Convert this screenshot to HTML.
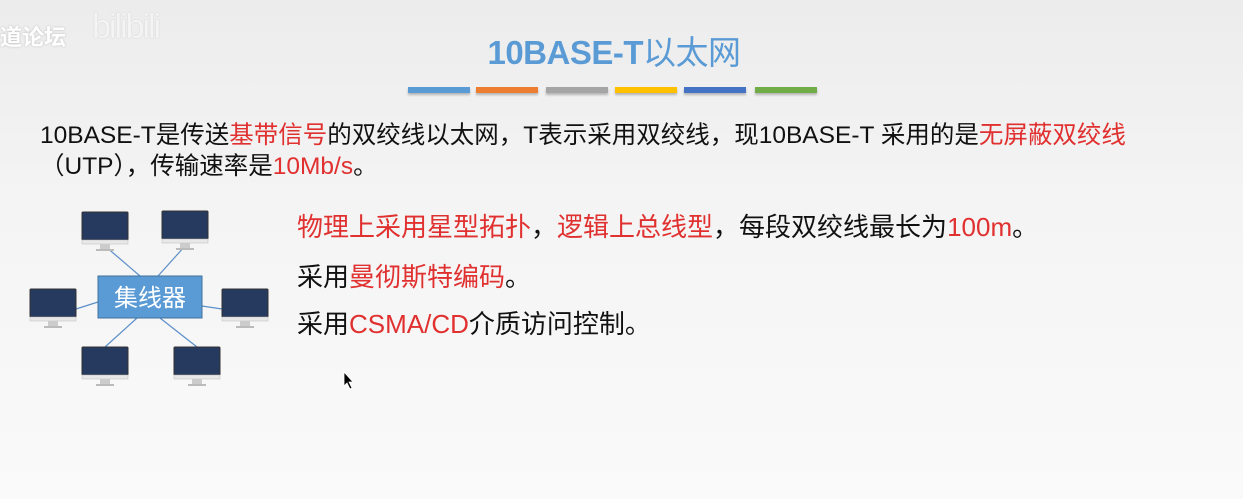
<!DOCTYPE html>
<html><head><meta charset="utf-8"><style>
body{margin:0;width:1243px;height:499px;overflow:hidden;background:linear-gradient(#ececec 0%,#f4f4f4 40%,#fafafa 100%);font-family:"Liberation Sans","Noto Sans CJK SC",sans-serif;position:relative}
.a{position:absolute;white-space:nowrap}
.r{color:#e0302f}
.bar{position:absolute;top:87px;height:6px;width:62px;box-shadow:0 2px 2px rgba(0,0,0,.25)}
</style></head><body>
<div class="a" style="left:0;top:20px;font-size:22px;color:#fff;font-weight:bold;text-shadow:0 0 2px #bbb">道论坛</div>
<div class="a" style="left:92px;top:8px;font-size:34px;color:#f4f4f4;text-shadow:0 0 1px #bbb;letter-spacing:-2px">bilibili</div>
<div class="a" style="left:0;width:1228px;text-align:center;top:26px;font-size:33px;font-weight:bold;color:#5b9bd5;letter-spacing:-0.5px">10BASE-T<span style="font-weight:normal">以太网</span></div>
<div class="bar" style="left:408px;background:#5b9bd5"></div>
<div class="bar" style="left:476px;background:#ed7d31"></div>
<div class="bar" style="left:546px;background:#a5a5a5"></div>
<div class="bar" style="left:615px;background:#ffc000"></div>
<div class="bar" style="left:684px;background:#4472c4"></div>
<div class="bar" style="left:755px;background:#70ad47"></div>
<div class="a" style="left:40px;top:120px;font-size:24.5px;line-height:31px;color:#111">10BASE-T是传送<span class="r">基带信号</span>的双绞线以太网，T表示采用双绞线，现10BASE-T 采用的是<span class="r">无屏蔽双绞线</span><br>（UTP），传输速率是<span class="r">10Mb/s</span>。</div>
<div class="a" style="left:297px;top:211px;font-size:26px;color:#111;line-height:32px"><span class="r">物理上采用星型拓扑</span>，<span class="r">逻辑上总线型</span>，每段双绞线最长为<span class="r">100m</span>。</div>
<div class="a" style="left:297px;top:261px;font-size:26px;color:#111;line-height:32px">采用<span class="r">曼彻斯特编码</span>。</div>
<div class="a" style="left:297px;top:308px;font-size:26px;color:#111;line-height:32px">采用<span class="r">CSMA/CD</span>介质访问控制。</div>
<svg class="a" style="left:0;top:0" width="360" height="400">
<g stroke="#5b8fc9" stroke-width="1.2">
<line x1="105" y1="246" x2="140" y2="276"/><line x1="185" y1="246" x2="158" y2="276"/>
<line x1="76" y1="309" x2="98" y2="302"/><line x1="202" y1="306" x2="222" y2="309"/>
<line x1="105" y1="347" x2="137" y2="318"/><line x1="197" y1="347" x2="160" y2="318"/>
</g>
<defs><g id="m"><rect x="0" y="0" width="46" height="28" rx="1" fill="#253a5e" stroke="#333"/><rect x="0" y="28" width="46" height="4" fill="#e8e8e8" stroke="#bbb" stroke-width=".5"/><rect x="18" y="32" width="10" height="5" fill="#ccc"/><rect x="14" y="37" width="18" height="2" fill="#bbb"/></g></defs>
<use href="#m" x="82" y="212"/><use href="#m" x="162" y="211"/>
<use href="#m" x="30" y="289"/><use href="#m" x="222" y="289"/>
<use href="#m" x="82" y="347"/><use href="#m" x="174" y="347"/>
<rect x="98" y="276" width="104" height="42" fill="#5b9bd5" stroke="#41719c"/>
<text x="150" y="306" text-anchor="middle" font-size="24" fill="#fff" font-family="Noto Sans CJK SC,sans-serif">集线器</text>
<path d="M344 372 l0 14 l3 -3 l3 6 l2 -1 l-3 -6 l4 0 z" fill="#000" stroke="#fff" stroke-width=".8"/>
</svg>
</body></html>
